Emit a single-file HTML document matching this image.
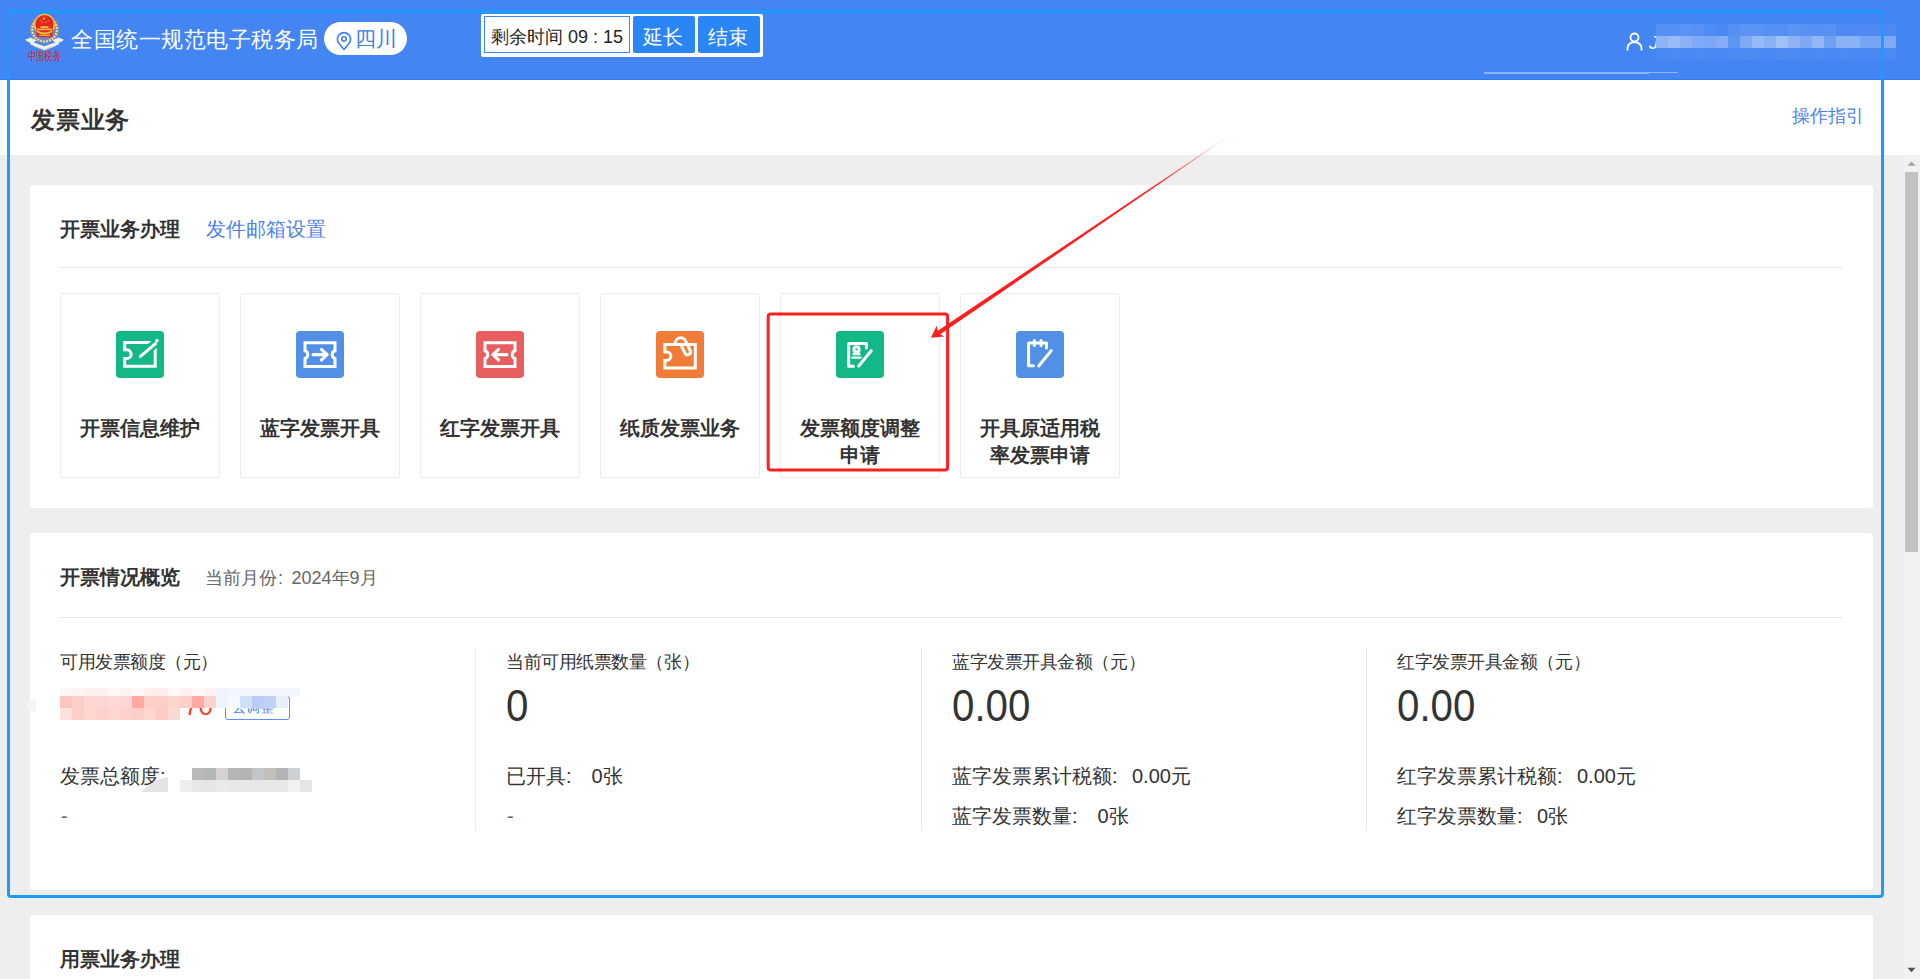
<!DOCTYPE html>
<html><head><meta charset="utf-8">
<style>
*{margin:0;padding:0;box-sizing:border-box}
html,body{width:1920px;height:979px;overflow:hidden;background:#eeeeee;font-family:"Liberation Sans",sans-serif;color:#333}
.abs{position:absolute}
.t{position:absolute;white-space:nowrap;line-height:1}
#hdr{position:absolute;left:0;top:0;width:1920px;height:80px;background:#4386f3}
#titlebar{position:absolute;left:0;top:80px;width:1920px;height:75px;background:#fff}
.card{position:absolute;left:30px;width:1843px;background:#fff;border-radius:3px}
.divl{position:absolute;height:1px;background:#e8e8e8}
.tile{position:absolute;top:293px;width:160px;height:185px;border:1px solid #ececec;border-radius:2px;background:#fff}
.ico{position:absolute;width:48px;height:47px;top:331px;border-radius:4px}
.tl{position:absolute;font-size:20px;font-weight:bold;color:#333;text-align:center;width:160px;line-height:27px}
.sb{position:absolute;left:1903px;top:155px;width:17px;height:824px;background:#f1f1f1}
.vdiv{position:absolute;top:648px;width:1px;height:182px;background:#e8e8e8}
.lab{font-size:18px;letter-spacing:-0.45px;color:#333}
.r2{font-size:20px;color:#333}
.big{font-size:44px;color:#333;transform:scaleX(0.915);transform-origin:0 0}
</style></head><body>
<div id="hdr">
 <svg class="abs" style="left:24px;top:12px" width="42" height="52" viewBox="0 0 42 52">
  <path d="M11.8 9 A12.4 12 0 1 0 29.4 9" fill="none" stroke="#8e8e8e" stroke-width="4.6"/>
  <path d="M11.8 9 A12.4 12 0 1 0 29.4 9" fill="none" stroke="#e6e6e6" stroke-width="2" stroke-dasharray="1.6 1.4"/>
  <circle cx="20.5" cy="12.6" r="10.8" fill="#f3c13a"/>
  <circle cx="20.5" cy="12.2" r="9.1" fill="#e3271f"/>
  <polygon points="12.3,17 28.9,17 28.4,24.9 12.7,24.9" fill="#e3271f"/>
  <circle cx="20" cy="6.6" r="1.2" fill="#f3c13a"/>
  <circle cx="16.3" cy="8.3" r="0.6" fill="#f3c13a"/><circle cx="24.3" cy="8.3" r="0.6" fill="#f3c13a"/>
  <circle cx="18.3" cy="10.3" r="0.6" fill="#f3c13a"/><circle cx="22" cy="10.3" r="0.6" fill="#f3c13a"/>
  <rect x="16.5" y="14.2" width="8" height="1.8" fill="#f3c13a"/>
  <rect x="13" y="16.6" width="15" height="1.6" fill="#f3c13a"/>
  <path d="M12.8 19.2 Q20.5 23.5 28.2 19.2" fill="none" stroke="#f3c13a" stroke-width="1.6"/>
  <rect x="15" y="22.6" width="11" height="1.2" fill="#f3c13a"/>
  <polygon points="1,27.8 6.5,25.6 12.5,28.2 9,31.2 4,30" fill="#eeeeee"/>
  <polygon points="40,27.8 34.5,25.6 28.5,28.2 32,31.2 37,30" fill="#eeeeee"/>
  <polygon points="6.4,29.2 20.3,34.3 34.6,29.2 35,32.2 20.3,38.2 6,32.2" fill="#f2f2f2"/>
  <polygon points="9,33.2 20.3,37.6 32,33.2 31,34.6 20.3,38.6 10,34.6" fill="#cfcfcf"/>
  <text x="20.5" y="48.5" font-size="9" fill="#d8241c" text-anchor="middle" font-family="Liberation Serif" transform="translate(20.5 48.5) scale(0.9 1.3) translate(-20.5 -48.5)">中国税务</text>
 </svg>
 <div class="t" style="left:71px;top:29px;font-size:22px;letter-spacing:0.5px;color:#fff">全国统一规范电子税务局</div>
 <div class="abs" style="left:324px;top:22px;width:83px;height:33px;border-radius:17px;background:#fff"></div>
 <svg class="abs" style="left:336px;top:31px" width="16" height="20" viewBox="0 0 16 20">
  <path d="M8 18.5 L3 12.5 A6.6 6.6 0 1 1 13 12.5 Z" fill="none" stroke="#3f7ff0" stroke-width="1.6" stroke-linejoin="round"/>
  <circle cx="8" cy="8" r="2.2" fill="none" stroke="#3f7ff0" stroke-width="1.6"/>
 </svg>
 <div class="t" style="left:355px;top:28px;font-size:21px;color:#3f7ff0">四川</div>
 <div class="abs" style="left:481px;top:14px;width:282px;height:43px;background:#fff;border-radius:2px"></div>
 <div class="abs" style="left:484px;top:16px;width:146px;height:37px;border:1px solid #3c86f0;background:#fff"></div>
 <div class="t" style="left:491px;top:28px;font-size:18px;color:#222">剩余时间 09 : 15</div>
 <div class="abs" style="left:633px;top:16px;width:62px;height:37px;background:#2a86f7;border-radius:2px"></div>
 <div class="abs" style="left:698px;top:16px;width:62px;height:37px;background:#2a86f7;border-radius:2px"></div>
 <div class="t" style="left:643px;top:27px;font-size:20px;color:#fff">延长</div>
 <div class="t" style="left:708px;top:27px;font-size:20px;color:#fff">结束</div>
 <svg class="abs" style="left:1626px;top:32px" width="18" height="19" viewBox="0 0 18 19">
  <circle cx="8.5" cy="5.5" r="4" fill="none" stroke="#fff" stroke-width="1.8"/>
  <path d="M1.5 18.5 V16 A7 6 0 0 1 15.5 16 V18.5" fill="none" stroke="#fff" stroke-width="1.8"/>
 </svg>
 <div class="t" style="left:1649px;top:33px;font-size:19px;color:#fff;font-style:italic">J</div>
<div class="abs" style="left:1656px;top:24px;width:12px;height:12px;background:#5590f3"></div>
<div class="abs" style="left:1668px;top:24px;width:12px;height:12px;background:#5591f4"></div>
<div class="abs" style="left:1680px;top:24px;width:12px;height:12px;background:#5a93f3"></div>
<div class="abs" style="left:1692px;top:24px;width:12px;height:12px;background:#5890f3"></div>
<div class="abs" style="left:1704px;top:24px;width:12px;height:12px;background:#4e8bf3"></div>
<div class="abs" style="left:1716px;top:24px;width:12px;height:12px;background:#4a88f3"></div>
<div class="abs" style="left:1728px;top:24px;width:12px;height:12px;background:#5690f3"></div>
<div class="abs" style="left:1740px;top:24px;width:12px;height:12px;background:#5b94f3"></div>
<div class="abs" style="left:1752px;top:24px;width:12px;height:12px;background:#5a93f3"></div>
<div class="abs" style="left:1764px;top:24px;width:12px;height:12px;background:#5590f3"></div>
<div class="abs" style="left:1776px;top:24px;width:12px;height:12px;background:#5790f3"></div>
<div class="abs" style="left:1788px;top:24px;width:12px;height:12px;background:#5b94f3"></div>
<div class="abs" style="left:1800px;top:24px;width:12px;height:12px;background:#5891f3"></div>
<div class="abs" style="left:1812px;top:24px;width:12px;height:12px;background:#5690f3"></div>
<div class="abs" style="left:1824px;top:24px;width:12px;height:12px;background:#5891f3"></div>
<div class="abs" style="left:1836px;top:24px;width:12px;height:12px;background:#4e8af3"></div>
<div class="abs" style="left:1848px;top:24px;width:12px;height:12px;background:#5089f3"></div>
<div class="abs" style="left:1860px;top:24px;width:12px;height:12px;background:#5089f3"></div>
<div class="abs" style="left:1872px;top:24px;width:12px;height:12px;background:#4f8af3"></div>
<div class="abs" style="left:1884px;top:24px;width:12px;height:12px;background:#4d89f3"></div>
<div class="abs" style="left:1656px;top:36px;width:12px;height:12px;background:#8cb4f7"></div>
<div class="abs" style="left:1668px;top:36px;width:12px;height:12px;background:#98bcf8"></div>
<div class="abs" style="left:1680px;top:36px;width:12px;height:12px;background:#8ab0f5"></div>
<div class="abs" style="left:1692px;top:36px;width:12px;height:12px;background:#7eaaf6"></div>
<div class="abs" style="left:1704px;top:36px;width:12px;height:12px;background:#7ea8f5"></div>
<div class="abs" style="left:1716px;top:36px;width:12px;height:12px;background:#84adf5"></div>
<div class="abs" style="left:1728px;top:36px;width:12px;height:12px;background:#5d95f3"></div>
<div class="abs" style="left:1740px;top:36px;width:12px;height:12px;background:#7da9f5"></div>
<div class="abs" style="left:1752px;top:36px;width:12px;height:12px;background:#95baf7"></div>
<div class="abs" style="left:1764px;top:36px;width:12px;height:12px;background:#88b1f6"></div>
<div class="abs" style="left:1776px;top:36px;width:12px;height:12px;background:#a0c0f8"></div>
<div class="abs" style="left:1788px;top:36px;width:12px;height:12px;background:#8eb4f7"></div>
<div class="abs" style="left:1800px;top:36px;width:12px;height:12px;background:#7da8f5"></div>
<div class="abs" style="left:1812px;top:36px;width:12px;height:12px;background:#93b7f6"></div>
<div class="abs" style="left:1824px;top:36px;width:12px;height:12px;background:#6ea0f4"></div>
<div class="abs" style="left:1836px;top:36px;width:12px;height:12px;background:#8cb2f6"></div>
<div class="abs" style="left:1848px;top:36px;width:12px;height:12px;background:#8ab2f6"></div>
<div class="abs" style="left:1860px;top:36px;width:12px;height:12px;background:#76a5f5"></div>
<div class="abs" style="left:1872px;top:36px;width:12px;height:12px;background:#76a5f5"></div>
<div class="abs" style="left:1884px;top:36px;width:12px;height:12px;background:#7faaf6"></div>
<div class="abs" style="left:1656px;top:48px;width:12px;height:12px;background:#4a89f3"></div>
<div class="abs" style="left:1668px;top:48px;width:12px;height:12px;background:#4c8af3"></div>
<div class="abs" style="left:1680px;top:48px;width:12px;height:12px;background:#4a89f3"></div>
<div class="abs" style="left:1692px;top:48px;width:12px;height:12px;background:#4b89f3"></div>
<div class="abs" style="left:1704px;top:48px;width:12px;height:12px;background:#4a88f3"></div>
<div class="abs" style="left:1716px;top:48px;width:12px;height:12px;background:#4a88f3"></div>
<div class="abs" style="left:1728px;top:48px;width:12px;height:12px;background:#4c8af3"></div>
<div class="abs" style="left:1740px;top:48px;width:12px;height:12px;background:#4d8bf3"></div>
<div class="abs" style="left:1752px;top:48px;width:12px;height:12px;background:#4b89f3"></div>
<div class="abs" style="left:1764px;top:48px;width:12px;height:12px;background:#4a89f3"></div>
<div class="abs" style="left:1776px;top:48px;width:12px;height:12px;background:#4d8bf3"></div>
<div class="abs" style="left:1788px;top:48px;width:12px;height:12px;background:#4b8af3"></div>
<div class="abs" style="left:1800px;top:48px;width:12px;height:12px;background:#4a88f3"></div>
<div class="abs" style="left:1812px;top:48px;width:12px;height:12px;background:#4c8af3"></div>
<div class="abs" style="left:1824px;top:48px;width:12px;height:12px;background:#4a89f3"></div>
<div class="abs" style="left:1836px;top:48px;width:12px;height:12px;background:#4b89f3"></div>
<div class="abs" style="left:1848px;top:48px;width:12px;height:12px;background:#4a88f3"></div>
<div class="abs" style="left:1860px;top:48px;width:12px;height:12px;background:#4a89f3"></div>
<div class="abs" style="left:1872px;top:48px;width:12px;height:12px;background:#4a89f3"></div>
<div class="abs" style="left:1884px;top:48px;width:12px;height:12px;background:#4b89f3"></div>
 <div class="abs" style="left:1484px;top:72px;width:165px;height:2px;background:#8fb4f8"></div>
 <div class="abs" style="left:1649px;top:72px;width:29px;height:1px;background:#8fb4f8"></div>
</div>
<div class="abs" style="left:0;top:79px;width:1920px;height:1px;background:#2f7cef"></div>
<div id="titlebar"></div>
<div class="t" style="left:31px;top:108px;font-size:24px;letter-spacing:0.8px;font-weight:bold;color:#333">发票业务</div>
<div class="t" style="left:1792px;top:107px;font-size:18px;color:#4a7ff0">操作指引</div>

<div class="card" style="top:185px;height:323px"></div>
<div class="t" style="left:60px;top:219px;font-size:20px;font-weight:bold;color:#333">开票业务办理</div>
<div class="t" style="left:206px;top:219px;font-size:20px;color:#4a7ff0">发件邮箱设置</div>
<div class="divl" style="left:60px;top:267px;width:1783px"></div>
<div class="tile" style="left:60px"></div>
<svg class="ico" style="left:116px;background:#14b787" width="48" height="47" viewBox="0 0 48 47"><path d="M36 11.5 H8.66 V18.8 H10.75 A4.4 4.4 0 0 1 10.75 27.6 H8.66 V35.3 H39.2 V14" fill="none" stroke="#fff" stroke-width="3"/>
 <path d="M20 28.8 L46 6.8" stroke="#14b787" stroke-width="8.6"/>
 <path d="M24.4 25.4 L39.5 12.6" stroke="#fff" stroke-width="3.1" stroke-linecap="round"/>
 <rect x="39.3" y="8.0" width="3.2" height="3.2" rx="1" fill="#fff" transform="rotate(-40 40.9 9.6)"/></svg>
<div class="tl" style="left:60px;top:415px">开票信息维护</div>
<div class="tile" style="left:240px"></div>
<svg class="ico" style="left:296px;background:#528fe6" width="48" height="47" viewBox="0 0 48 47"><path d="M9 11.7 H39 V19.8 A4.05 4.05 0 0 0 39 27.5 V35.6 H9 V27.5 A4.05 4.05 0 0 0 9 19.8 Z" fill="none" stroke="#fff" stroke-width="3"/>
 <path d="M17.1 23.65 H30.8" stroke="#fff" stroke-width="3.1" stroke-linecap="round"/>
 <path d="M25.4 18.3 L31.1 23.65 L25.4 29" fill="none" stroke="#fff" stroke-width="3.1" stroke-linecap="round" stroke-linejoin="round"/></svg>
<div class="tl" style="left:240px;top:415px">蓝字发票开具</div>
<div class="tile" style="left:420px"></div>
<svg class="ico" style="left:476px;background:#e65e5e" width="48" height="47" viewBox="0 0 48 47"><path d="M9 11.7 H39 V19.8 A4.05 4.05 0 0 0 39 27.5 V35.6 H9 V27.5 A4.05 4.05 0 0 0 9 19.8 Z" fill="none" stroke="#fff" stroke-width="3"/>
 <path d="M17.2 23.65 H30.9" stroke="#fff" stroke-width="3.1" stroke-linecap="round"/>
 <path d="M22.6 18.3 L16.9 23.65 L22.6 29" fill="none" stroke="#fff" stroke-width="3.1" stroke-linecap="round" stroke-linejoin="round"/></svg>
<div class="tl" style="left:420px;top:415px">红字发票开具</div>
<div class="tile" style="left:600px"></div>
<svg class="ico" style="left:656px;background:#f07c38" width="48" height="47" viewBox="0 0 48 47"><path d="M39.3 13.45 H8.9 V20.9 H10.6 A4.3 4.3 0 0 1 10.6 29.5 H8.9 V37 H39.3 Z" fill="none" stroke="#fff" stroke-width="3"/>
 <path d="M19.35 13.45 A5.4 5.4 0 0 1 29.47 9.86 L34.21 19.74 A2.9 2.9 0 0 1 28.99 22.26 L25.70 15.40" fill="none" stroke="#fff" stroke-width="3" stroke-linecap="round" stroke-linejoin="round"/></svg>
<div class="tl" style="left:600px;top:415px">纸质发票业务</div>
<div class="tile" style="left:780px"></div>
<svg class="ico" style="left:836px;background:#14b787" width="48" height="47" viewBox="0 0 48 47"><path d="M30.4 17.1 V12.5 H12.7 V35.3 H17.4" fill="none" stroke="#fff" stroke-width="3" stroke-linecap="round" stroke-linejoin="round"/>
 <circle cx="20.5" cy="18.4" r="2.6" fill="none" stroke="#fff" stroke-width="3"/>
 <path d="M17.4 23.1 H23.6" stroke="#fff" stroke-width="2.2" stroke-linecap="round"/>
 <path d="M16.3 26.6 H24.6" stroke="#fff" stroke-width="2.2" stroke-linecap="round"/>
 <path d="M22.7 35.0 L35.2 19.7" stroke="#fff" stroke-width="3" stroke-linecap="round"/></svg>
<div class="tl" style="left:780px;top:415px">发票额度调整<br>申请</div>
<div class="tile" style="left:960px"></div>
<svg class="ico" style="left:1016px;background:#528fe6" width="48" height="47" viewBox="0 0 48 47"><path d="M30.5 17.1 V12 H12.6 V34.8 H17.4" fill="none" stroke="#fff" stroke-width="3" stroke-linecap="round" stroke-linejoin="round"/>
 <path d="M18.4 9.6 V14.4 M25.1 9.6 V14.4" stroke="#fff" stroke-width="3" stroke-linecap="round"/>
 <path d="M22.7 35.0 L35.2 19.7" stroke="#fff" stroke-width="3" stroke-linecap="round"/></svg>
<div class="tl" style="left:960px;top:415px">开具原适用税<br>率发票申请</div>
<div class="card" style="top:533px;height:357px"></div>
<div class="t" style="left:60px;top:567px;font-size:20px;font-weight:bold;color:#333">开票情况概览</div>
<div class="t" style="left:205px;top:569px;font-size:18px;color:#666">当前月份<span style="display:inline-block;width:14.5px;padding-left:1px">:</span>2024年9月</div>
<div class="divl" style="left:60px;top:617px;width:1783px"></div>
<div class="vdiv" style="left:475px"></div>
<div class="vdiv" style="left:921px"></div>
<div class="vdiv" style="left:1366px"></div>
<div class="t lab" style="left:60px;top:653px">可用发票额度（元）</div>
<div class="t lab" style="left:506px;top:653px">当前可用纸票数量（张）</div>
<div class="t lab" style="left:952px;top:653px">蓝字发票开具金额（元）</div>
<div class="t lab" style="left:1397px;top:653px">红字发票开具金额（元）</div>
<div class="t big" style="left:506px;top:684px">0</div>
<div class="t big" style="left:952px;top:684px">0.00</div>
<div class="t big" style="left:1397px;top:684px">0.00</div>
<div class="t r2" style="left:60px;top:766px">发票总额度<span style="display:inline-block;width:1em">:</span></div>
<div class="t r2" style="left:61px;top:806px;color:#666">-</div>
<div class="t r2" style="left:506px;top:766px">已开具<span style="display:inline-block;width:1em">:</span> 0张</div>
<div class="t r2" style="left:507px;top:806px;color:#666">-</div>
<div class="t r2" style="left:952px;top:766px">蓝字发票累计税额<span style="display:inline-block;width:1em">:</span>0.00元</div>
<div class="t r2" style="left:952px;top:806px">蓝字发票数量<span style="display:inline-block;width:1em">:</span> 0张</div>
<div class="t r2" style="left:1397px;top:766px">红字发票累计税额<span style="display:inline-block;width:1em">:</span>0.00元</div>
<div class="t r2" style="left:1397px;top:806px">红字发票数量<span style="display:inline-block;width:1em">:</span>0张</div>
<div class="abs" style="left:225px;top:696px;width:65px;height:24px;border:1px solid #5a8ef0;border-radius:3px;background:#fff"></div><div class="t" style="left:232px;top:700px;font-size:14px;color:#4a7ff0">去调整</div><div class="t" style="left:184px;top:693px;font-size:26px;color:#f0442c">70</div><div class="abs" style="left:60px;top:688px;width:12px;height:8px;background:#fef6f5"></div>
<div class="abs" style="left:72px;top:688px;width:12px;height:8px;background:#fef3f1"></div>
<div class="abs" style="left:84px;top:688px;width:12px;height:8px;background:#fef0ee"></div>
<div class="abs" style="left:96px;top:688px;width:12px;height:8px;background:#fef1ef"></div>
<div class="abs" style="left:108px;top:688px;width:12px;height:8px;background:#fff8f7"></div>
<div class="abs" style="left:120px;top:688px;width:12px;height:8px;background:#fef2f0"></div>
<div class="abs" style="left:132px;top:688px;width:12px;height:8px;background:#fff9f8"></div>
<div class="abs" style="left:144px;top:688px;width:12px;height:8px;background:#feefec"></div>
<div class="abs" style="left:156px;top:688px;width:12px;height:8px;background:#feeeeb"></div>
<div class="abs" style="left:168px;top:688px;width:12px;height:8px;background:#fff8f7"></div>
<div class="abs" style="left:180px;top:688px;width:12px;height:8px;background:#fef0ee"></div>
<div class="abs" style="left:192px;top:688px;width:12px;height:8px;background:#fff9f8"></div>
<div class="abs" style="left:204px;top:688px;width:12px;height:8px;background:#fef3f1"></div>
<div class="abs" style="left:216px;top:688px;width:12px;height:8px;background:#eef3fd"></div>
<div class="abs" style="left:228px;top:688px;width:12px;height:8px;background:#f1f5fd"></div>
<div class="abs" style="left:240px;top:688px;width:12px;height:8px;background:#f1f5fd"></div>
<div class="abs" style="left:252px;top:688px;width:12px;height:8px;background:#f1f5fd"></div>
<div class="abs" style="left:264px;top:688px;width:12px;height:8px;background:#f1f5fd"></div>
<div class="abs" style="left:276px;top:688px;width:12px;height:8px;background:#f1f5fd"></div>
<div class="abs" style="left:288px;top:688px;width:12px;height:8px;background:#f3f6fe"></div><div class="abs" style="left:60px;top:696px;width:12px;height:12px;background:#fcc5c0"></div>
<div class="abs" style="left:72px;top:696px;width:12px;height:12px;background:#fdcfca"></div>
<div class="abs" style="left:84px;top:696px;width:12px;height:12px;background:#fdd5d1"></div>
<div class="abs" style="left:96px;top:696px;width:12px;height:12px;background:#fdd6d2"></div>
<div class="abs" style="left:108px;top:696px;width:12px;height:12px;background:#fdd9d5"></div>
<div class="abs" style="left:120px;top:696px;width:12px;height:12px;background:#fdd6d2"></div>
<div class="abs" style="left:132px;top:696px;width:12px;height:12px;background:#fca9a0"></div>
<div class="abs" style="left:144px;top:696px;width:12px;height:12px;background:#fdcfca"></div>
<div class="abs" style="left:156px;top:696px;width:12px;height:12px;background:#fdcdc8"></div>
<div class="abs" style="left:168px;top:696px;width:12px;height:12px;background:#fdd5d0"></div>
<div class="abs" style="left:180px;top:696px;width:12px;height:12px;background:#fdd0cb"></div>
<div class="abs" style="left:192px;top:696px;width:12px;height:12px;background:#fcaaa2"></div>
<div class="abs" style="left:204px;top:696px;width:12px;height:12px;background:#fdd3ce"></div>
<div class="abs" style="left:216px;top:696px;width:12px;height:12px;background:#eef3fd"></div>
<div class="abs" style="left:228px;top:696px;width:12px;height:12px;background:#f7f9fe"></div>
<div class="abs" style="left:240px;top:696px;width:12px;height:12px;background:#d0def8"></div>
<div class="abs" style="left:252px;top:696px;width:12px;height:12px;background:#bccbf5"></div>
<div class="abs" style="left:264px;top:696px;width:12px;height:12px;background:#bfd2f6"></div>
<div class="abs" style="left:276px;top:696px;width:12px;height:12px;background:#e8effc"></div><div class="abs" style="left:60px;top:708px;width:12px;height:12px;background:#fde1dd"></div>
<div class="abs" style="left:72px;top:708px;width:12px;height:12px;background:#fdcdc8"></div>
<div class="abs" style="left:84px;top:708px;width:12px;height:12px;background:#fdd6d2"></div>
<div class="abs" style="left:96px;top:708px;width:12px;height:12px;background:#fdd0cb"></div>
<div class="abs" style="left:108px;top:708px;width:12px;height:12px;background:#fdd6d2"></div>
<div class="abs" style="left:120px;top:708px;width:12px;height:12px;background:#fdd0cb"></div>
<div class="abs" style="left:132px;top:708px;width:12px;height:12px;background:#fdcdc8"></div>
<div class="abs" style="left:144px;top:708px;width:12px;height:12px;background:#fdd6d2"></div>
<div class="abs" style="left:156px;top:708px;width:12px;height:12px;background:#fccbc5"></div>
<div class="abs" style="left:168px;top:708px;width:12px;height:12px;background:#fdd9d5"></div><div class="abs" style="left:192px;top:768px;width:12px;height:12px;background:#b8baba"></div>
<div class="abs" style="left:204px;top:768px;width:12px;height:12px;background:#b5b6b6"></div>
<div class="abs" style="left:216px;top:768px;width:12px;height:12px;background:#d5d2cf"></div>
<div class="abs" style="left:228px;top:768px;width:12px;height:12px;background:#b6b6b6"></div>
<div class="abs" style="left:240px;top:768px;width:12px;height:12px;background:#b3b4b4"></div>
<div class="abs" style="left:252px;top:768px;width:12px;height:12px;background:#c3c6c9"></div>
<div class="abs" style="left:264px;top:768px;width:12px;height:12px;background:#c5bfba"></div>
<div class="abs" style="left:276px;top:768px;width:12px;height:12px;background:#b2b3b5"></div>
<div class="abs" style="left:288px;top:768px;width:12px;height:12px;background:#cdd1d4"></div>
<div class="abs" style="left:180px;top:780px;width:12px;height:12px;background:#eeeeee"></div>
<div class="abs" style="left:192px;top:780px;width:12px;height:12px;background:#e6e7e7"></div>
<div class="abs" style="left:204px;top:780px;width:12px;height:12px;background:#e6e6e6"></div>
<div class="abs" style="left:216px;top:780px;width:12px;height:12px;background:#eaeaea"></div>
<div class="abs" style="left:228px;top:780px;width:12px;height:12px;background:#e8e8e8"></div>
<div class="abs" style="left:240px;top:780px;width:12px;height:12px;background:#e8e8e8"></div>
<div class="abs" style="left:252px;top:780px;width:12px;height:12px;background:#e6e7e8"></div>
<div class="abs" style="left:264px;top:780px;width:12px;height:12px;background:#e7e8e9"></div>
<div class="abs" style="left:276px;top:780px;width:12px;height:12px;background:#e6e7e8"></div>
<div class="abs" style="left:288px;top:780px;width:12px;height:12px;background:#f1f1f1"></div>
<div class="abs" style="left:300px;top:780px;width:12px;height:12px;background:#e5e5e5"></div><svg class="abs" style="left:0;top:0" width="340" height="800"><polygon points="26,705.5 30,700 36,699 36,712 33,712 29,710" fill="#f4f4f4"/><polygon points="140,792 156,780 168,777 168,792" fill="#e4e4e4"/></svg><div class="card" style="top:915px;height:80px"></div>
<div class="t" style="left:60px;top:949px;font-size:20px;font-weight:bold;color:#333">用票业务办理</div>
<div class="sb"></div>
<div class="abs" style="left:1905px;top:172px;width:13px;height:380px;background:#c1c1c1"></div>
<svg class="abs" style="left:1903px;top:155px" width="17" height="17"><polygon points="8.5,6.5 12.5,10.8 4.5,10.8" fill="#a3a3a3"/></svg>
<svg class="abs" style="left:1903px;top:962px" width="17" height="17"><polygon points="4.5,5.8 12.5,5.8 8.5,10.2" fill="#505050"/></svg>
<svg class="abs" style="left:0;top:0" width="1920" height="979" viewBox="0 0 1920 979">
 <rect x="768.2" y="314" width="179.4" height="155.9" rx="2.5" fill="none" stroke="#ff1e1e" stroke-width="3"/>
 <defs><linearGradient id="fade" gradientUnits="userSpaceOnUse" x1="1230" y1="135" x2="1150" y2="189"><stop offset="0" stop-color="#ff1e1e" stop-opacity="0"/><stop offset="1" stop-color="#ff1e1e" stop-opacity="1"/></linearGradient></defs>
 <polygon points="931,337.8 936.6,325.8 937.8,330.7 1228.26,136.09 1228.54,136.51 940.2,334.3 944.3,336.5" fill="url(#fade)"/>
</svg>
<div class="abs" style="left:7px;top:10px;width:1877px;height:888px;border:3px solid #1b9bff;border-radius:4px"></div>
</body></html>
